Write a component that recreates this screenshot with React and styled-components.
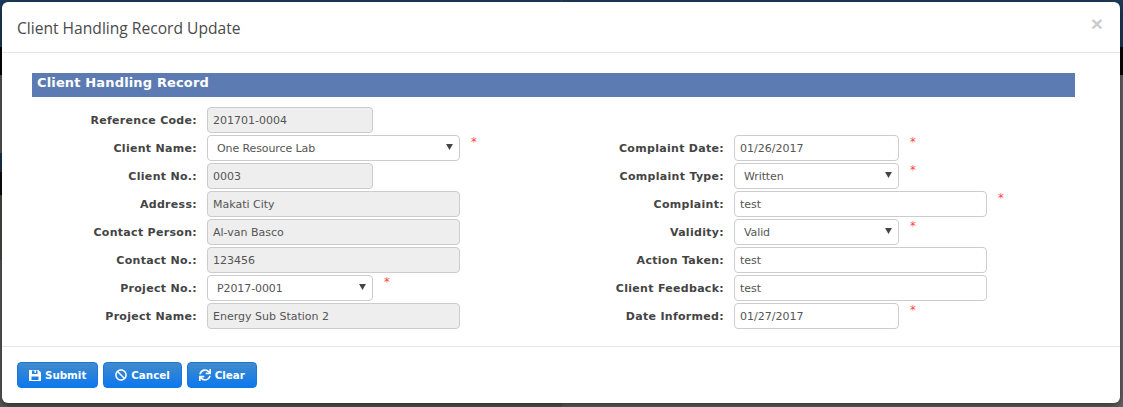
import React from "react";
import styled, { createGlobalStyle } from "styled-components";
import { FaBan, FaSync } from "react-icons/fa";

const Global = createGlobalStyle`
  html, body { margin: 0; padding: 0; height: 407px; overflow: hidden; background: #555; }
  * { box-sizing: border-box; }
`;
const Backdrop = styled.div`
  width: 1123px; height: 407px; padding: 2px 3px 4px 2px;
  background:
    linear-gradient(to bottom, #1d3b5c 0 47px, #060606 47px 75px, #585858 75px 153px, #1c3550 153px 172px, #0c0c0c 172px 195px, #4e4b48 195px 260px, #5a5a5a 260px) left / 50% 100% no-repeat,
    linear-gradient(to bottom, #1d3b5c 0 47px, #060606 47px 75px, #666 75px) right / 50% 100% no-repeat;
  font-family: "DejaVu Sans", Verdana, sans-serif;
`;
const Modal = styled.div`
  width: 1118px; height: 401px; background: #fff; border-radius: 6px;
  display: flex; flex-direction: column;
  box-shadow: 0 3px 9px rgba(0,0,0,.5);
`;
const Header = styled.header`
  height: 51px; flex: none; border-bottom: 1px solid #e5e5e5;
  padding: 2px 15px 0; display: flex; align-items: center; justify-content: space-between;
`;
const Title = styled.h4`
  margin: 0; font: 400 15.6px/22px "Open Sans", sans-serif; color: #4a4a4a;
`;
const Close = styled.span`
  font: 700 21px/1 "Liberation Sans", sans-serif; color: #000; opacity: .2;
  margin: -10px 2px 0 0;
`;
const Body = styled.div`
  flex: 1; padding: 20px 45px 0 30px;
`;
const Band = styled.h5`
  margin: 0 0 10px; height: 24px; padding: 2px 5px 0; background: #5b7bb2; color: #fff;
  font: 700 13px/16px "DejaVu Sans", sans-serif; letter-spacing: .15px;
`;
const Columns = styled.div`
  display: grid; grid-template-columns: 528px 1fr;
`;
const Column = styled.div`
  display: flex; flex-direction: column; gap: 2px;
  padding-top: ${p => p.$top || 0}px;
`;
const Row = styled.div`
  display: flex; align-items: flex-start; height: 26px;
`;
const Label = styled.label`
  width: ${p => p.$w}px; flex: none; padding-right: 10px; text-align: right;
  font: 700 11px/27px "DejaVu Sans", sans-serif; color: #444; letter-spacing: .3px;
`;
const fieldCss = `
  height: 26px; border: 1px solid #ccc; border-radius: 4px; display: flex; align-items: center;
  font: 400 11px/1 "DejaVu Sans", sans-serif; color: #555; background: #fff;
`;
const Input = styled.div`
  ${fieldCss}
  width: ${p => p.$w}px; padding: 0 9px 0 5px;
  background: ${p => p.$off ? "#eee" : "#fff"};
`;
const Select = styled.div`
  ${fieldCss}
  width: ${p => p.$w}px; padding: 0 6px 0 9px; justify-content: space-between;
  letter-spacing: -.1px;
`;
const Arrow = styled.svg`
  width: 7px; height: 6px; fill: #444; margin-top: -2px;
`;
const Star = styled.span`
  margin-left: 11px; color: #f44; font: 400 11.5px/15px "DejaVu Sans", sans-serif;
`;
const Footer = styled.footer`
  height: 57px; flex: none; border-top: 1px solid #e5e5e5; padding: 15px 15px 0; display: flex; gap: 5px;
`;
const Button = styled.button`
  height: 26px; border: 1px solid #1a76d8; border-radius: 4px; padding: 0 11px; margin: 0;
  background: linear-gradient(to bottom, #428bca 0%, #0b78f0 100%);
  color: #fff; font: 700 10.3px/1 "DejaVu Sans", sans-serif;
  display: flex; align-items: center; gap: 4px;
  svg { width: 12px; height: 12px; flex: none; fill: #fff; }
`;

const FloppyIcon = () => (
  <svg viewBox="0 0 12 12">
    <path fillRule="evenodd" d="M0 1h9.5L12 3.5V12H0zM3 1.5V5h5.5V1.5H7V4H5.5V1.5zM2.5 7.5V11h7V7.5z" />
  </svg>
);

const Field = ({ label, value, w, off, sel, star, lw }) => (
  <Row>
    <Label $w={lw}>{label}</Label>
    {sel ? (
      <Select $w={w}>{value}<Arrow viewBox="0 0 8 7"><path d="M0 0h8L4 7z" /></Arrow></Select>
    ) : (
      <Input $w={w} $off={off}>{value}</Input>
    )}
    {star && <Star>*</Star>}
  </Row>
);

const left = [
  { label: "Reference Code:", value: "201701-0004", w: 166, off: true },
  { label: "Client Name:", value: "One Resource Lab", w: 253, sel: true, star: true },
  { label: "Client No.:", value: "0003", w: 166, off: true },
  { label: "Address:", value: "Makati City", w: 253, off: true },
  { label: "Contact Person:", value: "Al-van Basco", w: 253, off: true },
  { label: "Contact No.:", value: "123456", w: 253, off: true },
  { label: "Project No.:", value: "P2017-0001", w: 166, sel: true, star: true },
  { label: "Project Name:", value: "Energy Sub Station 2", w: 253, off: true },
];
const right = [
  { label: "Complaint Date:", value: "01/26/2017", w: 165, star: true },
  { label: "Complaint Type:", value: "Written", w: 165, sel: true, star: true },
  { label: "Complaint:", value: "test", w: 253, star: true },
  { label: "Validity:", value: "Valid", w: 165, sel: true, star: true },
  { label: "Action Taken:", value: "test", w: 253 },
  { label: "Client Feedback:", value: "test", w: 253 },
  { label: "Date Informed:", value: "01/27/2017", w: 165, star: true },
];

export default function App() {
  return (
    <Backdrop>
      <Global />
      <Modal>
        <Header>
          <Title>Client Handling Record Update</Title>
          <Close>×</Close>
        </Header>
        <Body>
          <Band>Client Handling Record</Band>
          <Columns>
            <Column>{left.map(f => <Field key={f.label} lw={175} {...f} />)}</Column>
            <Column $top={28}>{right.map(f => <Field key={f.label} lw={174} {...f} />)}</Column>
          </Columns>
        </Body>
        <Footer>
          <Button><FloppyIcon />Submit</Button>
          <Button><FaBan />Cancel</Button>
          <Button><FaSync />Clear</Button>
        </Footer>
      </Modal>
    </Backdrop>
  );
}
